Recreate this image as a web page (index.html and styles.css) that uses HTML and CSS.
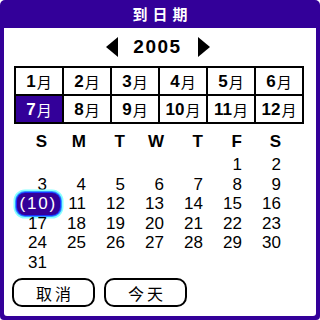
FILE: index.html
```html
<!DOCTYPE html>
<html>
<head>
<meta charset="utf-8">
<link rel="stylesheet" href="styles.css">
</head>
<body>
<div class="dialog">
  <div class="title">到日期</div>
  <div class="panel">
    <div class="year-row">
      <svg class="arrow" width="12" height="20" viewBox="0 0 12 20"><polygon points="12,0 12,20 0,10" fill="#000"/></svg>
      <span class="year">2005</span>
      <svg class="arrow" width="12" height="20" viewBox="0 0 12 20"><polygon points="0,0 0,20 12,10" fill="#000"/></svg>
    </div>
    <div class="months">
      <div class="month"><b>1</b>月</div>
      <div class="month"><b>2</b>月</div>
      <div class="month"><b>3</b>月</div>
      <div class="month"><b>4</b>月</div>
      <div class="month"><b>5</b>月</div>
      <div class="month"><b>6</b>月</div>
      <div class="month current"><b>7</b>月</div>
      <div class="month"><b>8</b>月</div>
      <div class="month"><b>9</b>月</div>
      <div class="month"><b>10</b>月</div>
      <div class="month"><b>11</b>月</div>
      <div class="month"><b>12</b>月</div>
    </div>
    <div class="weekdays">
      <div>S</div><div>M</div><div>T</div><div>W</div><div>T</div><div>F</div><div>S</div>
    </div>
    <div class="days">
      <div></div><div></div><div></div><div></div><div></div><div>1</div><div>2</div>
      <div>3</div><div>4</div><div>5</div><div>6</div><div>7</div><div>8</div><div>9</div>
      <div><span class="sel">(10)</span></div><div>11</div><div>12</div><div>13</div><div>14</div><div>15</div><div>16</div>
      <div>17</div><div>18</div><div>19</div><div>20</div><div>21</div><div>22</div><div>23</div>
      <div>24</div><div>25</div><div>26</div><div>27</div><div>28</div><div>29</div><div>30</div>
      <div>31</div>
    </div>
    <div class="buttons">
      <div class="btn">取消</div>
      <div class="btn">今天</div>
    </div>
  </div>
</div>
</body>
</html>
```
FILE: styles.css
```css
html, body {
  margin: 0;
  padding: 0;
  background: #fff;
}
.dialog {
  width: 320px;
  height: 320px;
  box-sizing: border-box;
  background: #330099;
  border-radius: 5px 5px 4px 4px;
  padding: 0 4px 4px 4px;
  display: flex;
  flex-direction: column;
  font-family: "Liberation Sans", "Noto Sans CJK SC", sans-serif;
  color: #000;
}
.title {
  height: 28px;
  line-height: 28px;
  text-align: center;
  color: #fff;
  font-family: "Noto Sans CJK SC", sans-serif;
  font-weight: bold;
  font-size: 15px;
  letter-spacing: 5px;
  padding-left: 5px;
}
.panel {
  flex: 1;
  background: #fff;
  border-radius: 0 0 3px 3px;
  display: flex;
  flex-direction: column;
}
.year-row {
  margin-top: 9px;
  height: 20px;
  display: flex;
  justify-content: center;
  align-items: center;
  padding-right: 4px;
}
.arrow {
  display: block;
}
.year {
  font-weight: bold;
  font-size: 19px;
  letter-spacing: 1.5px;
  margin: 0 16px 0 15px;
  line-height: 20px;
}
.months {
  margin: 9px 0 0 10px;
  width: 290px;
  box-sizing: border-box;
  background: #000;
  padding: 2px;
  display: grid;
  grid-template-columns: repeat(6, 46px);
  grid-auto-rows: 26px;
  gap: 2px;
}
.month {
  background: #fff;
  display: flex;
  align-items: center;
  justify-content: center;
  font-family: "Noto Sans CJK SC", sans-serif;
  font-size: 15px;
  line-height: 1;
}
.month b {
  font-family: "Liberation Sans", sans-serif;
  font-size: 17px;
  font-weight: bold;
  margin-right: 1px;
}
.month.current {
  background: #330099;
  color: #fff;
}
.weekdays {
  margin: 8px 0 0 4px;
  display: grid;
  grid-template-columns: repeat(7, 39px);
  grid-auto-rows: 20px;
  font-weight: bold;
  font-size: 17px;
  line-height: 20px;
  text-align: right;
}
.days {
  margin: 3px 0 0 4px;
  display: grid;
  grid-template-columns: repeat(7, 39px);
  grid-auto-rows: 19.5px;
  font-size: 17px;
  line-height: 19.5px;
}
.days > div {
  display: flex;
  justify-content: flex-end;
  align-items: center;
}
.sel {
  flex: none;
  height: 22px;
  line-height: 22px;
  background: #330099;
  color: #fff;
  letter-spacing: 1.8px;
  border-radius: 8px;
  padding: 0 3px 0 3px;
  margin-right: -13px;
  box-shadow: 0 0 0 1px #1a33ff, 0 0 0 2px #3399ff, 0 0 0 3.5px #88ffff;
}
.buttons {
  margin: auto 0 9px 8px;
  display: flex;
  gap: 9px;
}
.btn {
  width: 83px;
  height: 29px;
  box-sizing: border-box;
  border: 2px solid #000;
  border-radius: 10px;
  display: flex;
  align-items: center;
  justify-content: center;
  font-family: "Noto Sans CJK SC", sans-serif;
  font-size: 16px;
  letter-spacing: 3px;
  padding-left: 3px;
}
```
